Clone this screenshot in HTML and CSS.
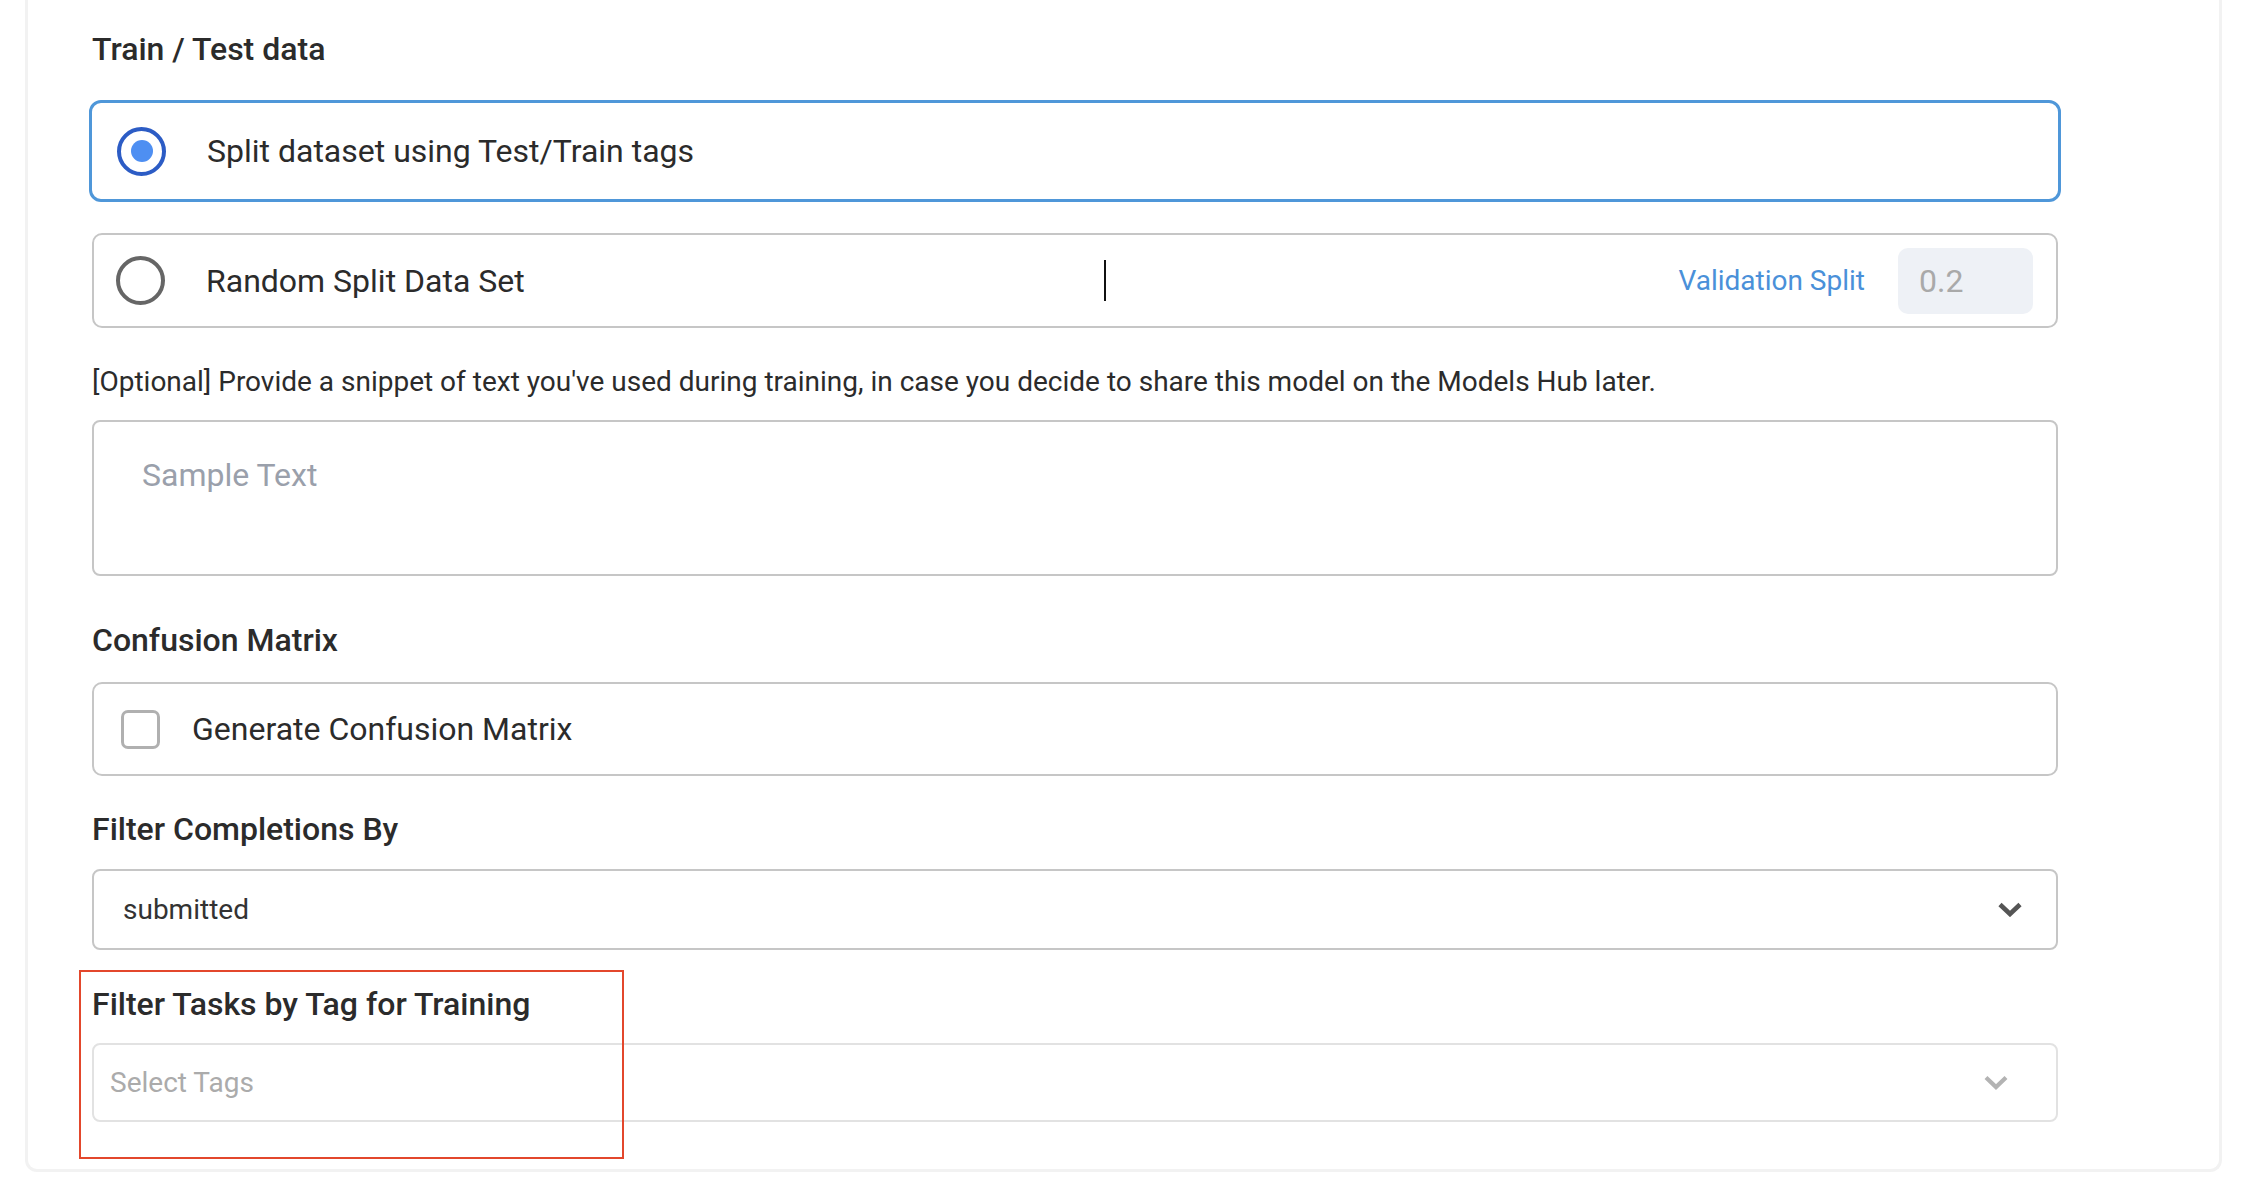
FILE: index.html
```html
<!DOCTYPE html>
<html lang="en">
<head>
<meta charset="utf-8">
<title>Train / Test data</title>
<link rel="stylesheet" href="styles.css">
</head>
<body>
<div class="card">
  <h3 class="field-label label-first">Train / Test data</h3>

  <div class="option option--selected">
    <span class="radio radio--on"><span class="radio-dot"></span></span>
    <span class="option-text">Split dataset using Test/Train tags</span>
  </div>

  <div class="option option--plain">
    <span class="radio"></span>
    <span class="option-text">Random Split Data Set</span>
    <span class="caret"></span>
    <span class="split-label">Validation Split</span>
    <span class="split-input">0.2</span>
  </div>

  <p class="hint">[Optional] Provide a snippet of text you've used during training, in case you decide to share this model on the Models Hub later.</p>

  <div class="textarea"><span class="placeholder">Sample Text</span></div>

  <h3 class="field-label label-confusion">Confusion Matrix</h3>
  <div class="option option--check">
    <span class="checkbox"></span>
    <span class="option-text">Generate Confusion Matrix</span>
  </div>

  <h3 class="field-label label-filter">Filter Completions By</h3>
  <div class="select">
    <span class="select-value">submitted</span>
    <svg class="chevron" width="24" height="15" viewBox="0 0 24 15"><polyline points="2,2.5 12,12 22,2.5" fill="none" stroke="#555555" stroke-width="4.6"/></svg>
  </div>

  <div class="tag-field">
    <h3 class="field-label">Filter Tasks by Tag for Training</h3>
    <div class="select select--tags">
      <span class="select-placeholder">Select Tags</span>
      <svg class="chevron" width="24" height="15" viewBox="0 0 24 15"><polyline points="2,2.5 12,12 22,2.5" fill="none" stroke="#b3b3b3" stroke-width="4.2"/></svg>
    </div>
    <div class="highlight"></div>
  </div>
</div>
</body>
</html>
```

FILE: styles.css
```css
* { box-sizing: border-box; }

html, body {
  margin: 0;
  padding: 0;
  background: #ffffff;
  font-family: Roboto, "Liberation Sans", Arial, sans-serif;
  color: #2b2b2b;
}

.card {
  margin-left: 25px;
  width: 2197px;
  border: 3px solid #f2f2f2;
  border-top: 0;
  border-radius: 0 0 12px 12px;
  padding: 29px 161px 47px 64px;
  background: #ffffff;
}

.field-label {
  margin: 0;
  font-size: 32px;
  line-height: 40px;
  font-weight: 500;
  color: #2b2b2b;
}

.label-confusion { margin-top: 44px; }
.label-filter { margin-top: 33px; }

.option {
  position: relative;
  display: flex;
  align-items: center;
  border: 2px solid #c6c6c6;
  border-radius: 10px;
  background: #fff;
}

.option--selected {
  margin: 31px -3px 0;
  height: 102px;
  border: 3px solid #4f97d9;
  border-radius: 12px;
  padding-left: 25px;
}

.option--plain {
  margin-top: 31px;
  height: 95px;
  padding-left: 22px;
  padding-right: 23px;
}

.option--check {
  margin-top: 22px;
  height: 94px;
  padding-left: 27px;
}

.radio {
  flex: none;
  width: 49px;
  height: 49px;
  border-radius: 50%;
  border: 4px solid #666666;
  display: flex;
  align-items: center;
  justify-content: center;
}

.radio--on { border-color: #2c5cc5; border-width: 4.5px; }

.radio-dot {
  width: 22px;
  height: 22px;
  border-radius: 50%;
  background: #4e8ff2;
}

.option-text {
  margin-left: 41px;
  font-size: 32px;
  line-height: 40px;
  color: #2b2b2b;
}

.checkbox {
  flex: none;
  width: 39px;
  height: 39px;
  border: 3.5px solid #b0b0b0;
  border-radius: 7px;
}

.option--check .option-text { margin-left: 32px; }

.caret {
  position: absolute;
  left: 1010px;
  top: 25px;
  width: 2px;
  height: 41px;
  background: #111;
}

.split-label {
  margin-left: auto;
  font-size: 28px;
  line-height: 36px;
  color: #4a90d9;
}

.split-input {
  margin-left: 33px;
  width: 135px;
  height: 66px;
  border-radius: 10px;
  background: #eef1f6;
  padding-left: 21px;
  font-size: 32px;
  line-height: 66px;
  color: #a9a9a9;
}

.hint {
  margin: 36px 0 0;
  font-size: 28px;
  line-height: 36px;
  color: #2b2b2b;
}

.textarea {
  margin-top: 20px;
  height: 156px;
  border: 2px solid #c6c6c6;
  border-radius: 8px;
  padding: 33px 48px 0;
}

.placeholder {
  font-size: 32px;
  line-height: 40px;
  color: #9aa0ab;
}

.select {
  margin-top: 20px;
  height: 81px;
  display: flex;
  align-items: center;
  justify-content: space-between;
  border: 2px solid #c6c6c6;
  border-radius: 8px;
  padding: 0 34px 0 29px;
}

.select-value {
  font-size: 28px;
  line-height: 36px;
  color: #333;
}

.chevron { flex: none; display: block; }

.tag-field {
  position: relative;
  margin-top: 34px;
}

.select--tags {
  margin-top: 19px;
  height: 79px;
  border-color: #e2e2e2;
  padding: 0 48px 0 16px;
}

.select-placeholder {
  font-size: 28px;
  line-height: 36px;
  color: #ababab;
}

.highlight {
  position: absolute;
  left: -13px;
  top: -14px;
  width: 545px;
  height: 189px;
  border: 2.5px solid #e3472c;
  pointer-events: none;
}
```
